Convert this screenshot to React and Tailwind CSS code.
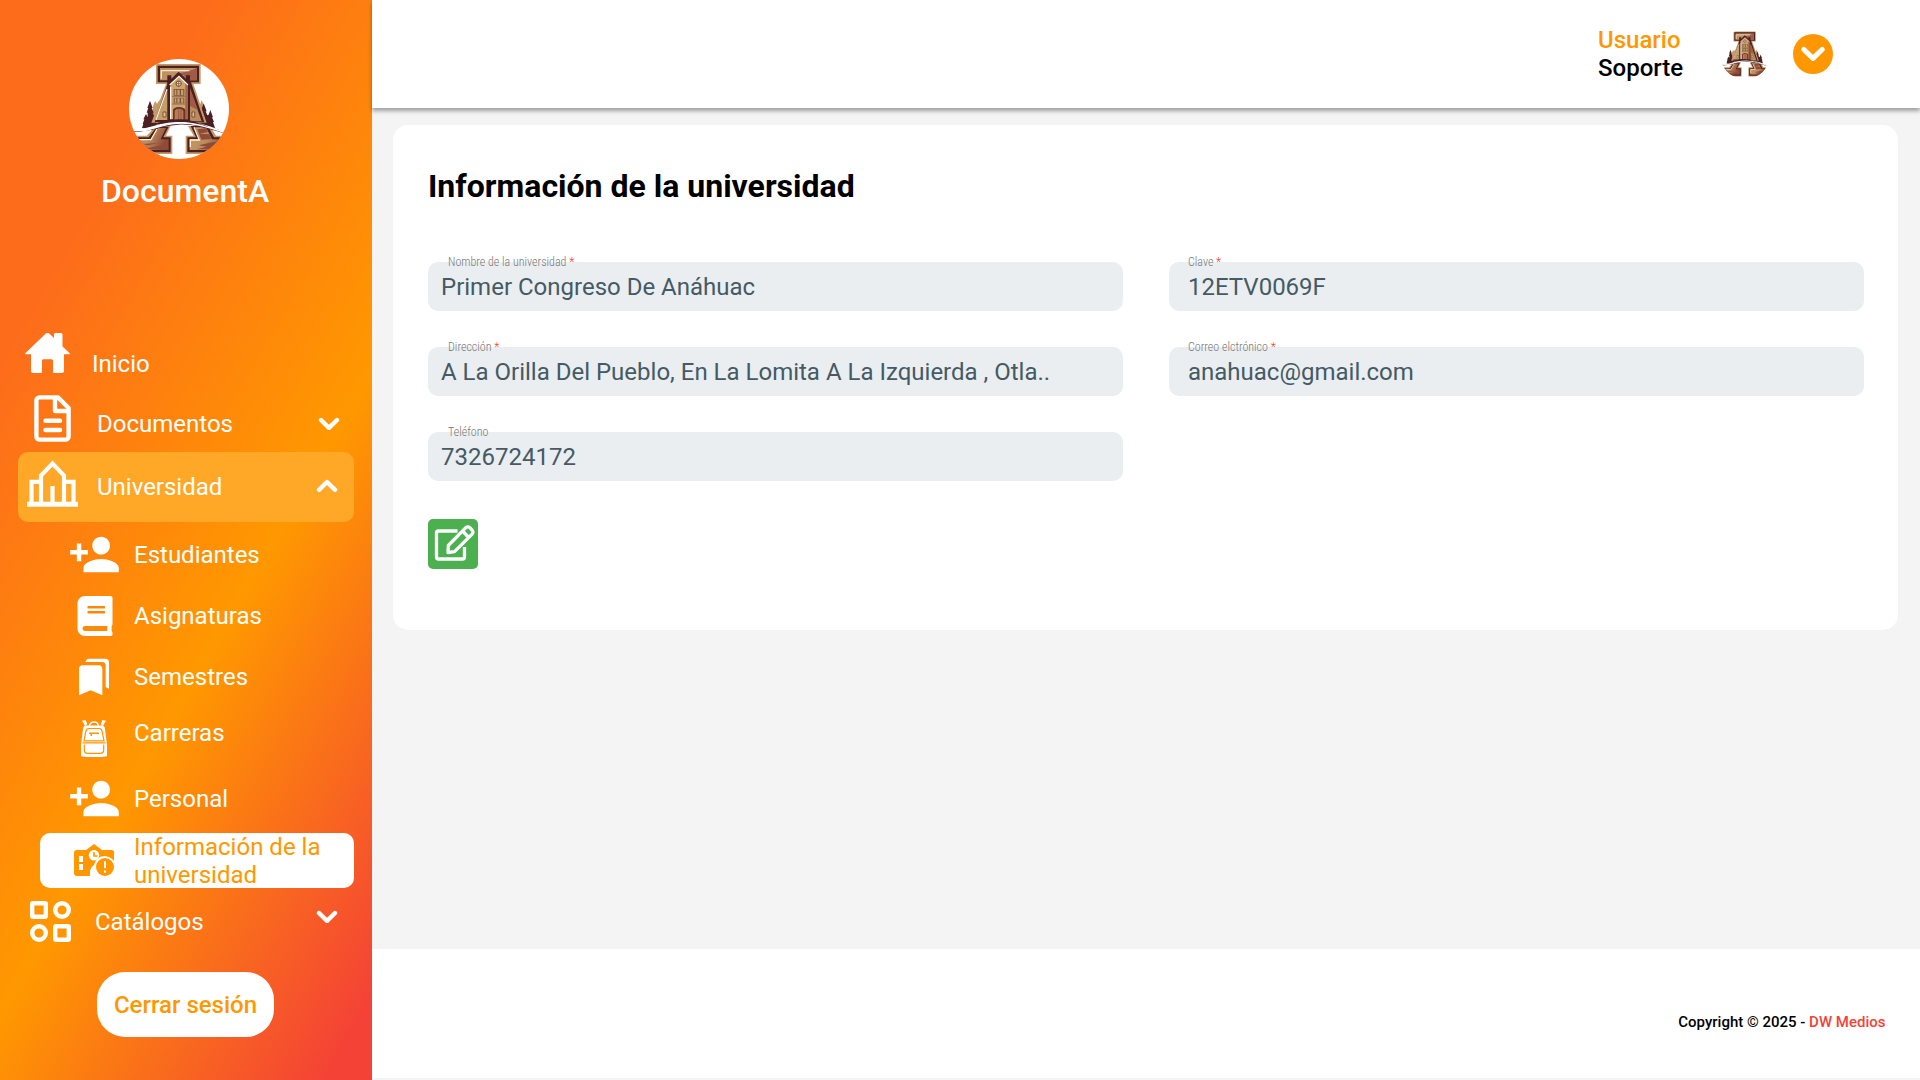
import React from "react";
import { MdPersonAdd, MdBookmarks } from "react-icons/md";
import { FaBook } from "react-icons/fa";

function Logo({ className }) {
  return (
    <svg viewBox="147 57 300 300" className={className}>
      <defs>
        <clipPath id="emblem">
          <circle cx="297" cy="207" r="150" />
        </clipPath>
        <linearGradient id="bronze" x1="0" x2="1" y1="0" y2="0.3">
          <stop offset="0" stopColor="#c79d68" />
          <stop offset="0.55" stopColor="#bb8c5c" />
          <stop offset="1" stopColor="#8f4a38" />
        </linearGradient>
      </defs>
      <circle cx="297" cy="207" r="150" fill="#fff" />
      <g clipPath="url(#emblem)">
        {/* pine trees */}
        <path d="M216 220l4-24 6-14 5 10 8-14v46l-12 24zM352 200l2-16 6 10 5-14 6 16 4 22-12 10z" fill="#c49a68" />
        <path d="M186 264l4-12-2 0 5-14-3 0 8-16 5 10 0-14-3 0 5-14-3 0 8-22 8 22-3 0 6 14-3 0 7 16-3 0 6 12 4 14-10 12z" fill="#4c1f22" />
        <path d="M360 224l4-10-2 0 9-24 9 24-3 0 5 12 4-2 5-14 8 22-3 0 6 14-3 0 6 18-24-2-26-12z" fill="#4c1f22" />
        {/* left foot */}
        <path d="M228 258h44l-14 29h19v55H150v-55h50z" fill="#c49a68" />
        <path d="M230 260h36l-16 32h22v45H150v-45h56z" fill="#4c1f22" />
        <path d="M234 264h24l-16 34h24v32H165l-8-32h56z" fill="url(#bronze)" />
        <path d="M160 299h53l18-32" stroke="#fff3dc" strokeWidth="4" fill="none" />
        <path d="M196 326l66-14v16h-60zM188 312l46-3-30 7z" fill="#8f4a38" />
        {/* right foot */}
        <path d="M324 258h66l18 29h40v55H317v-55h24z" fill="#c49a68" />
        <path d="M332 258h52l18 34h46v45H322v-45h26z" fill="#4c1f22" />
        <path d="M344 262h34l18 36h50l-20 32h-97v-32h30z" fill="url(#bronze)" />
        <path d="M331 322v-22h27l-16-38" stroke="#fff3dc" strokeWidth="4" fill="none" />
        <path d="M352 268l26-3 6 11-26 5 30 2 6 14-30 2zM356 316l44-10h40l-12 22h-78l30-8z" fill="#8f4a38" />
        {/* upper letter */}
        <path d="M228 72h134v60h-22l40 116H214l44-116h-30z" fill="#c49a68" />
        <path d="M233 77h124v50h-24l40 120H224l40-120h-31z" fill="#4c1f22" />
        <path d="M240 84h110v37H240z" fill="#bd9161" />
        <path d="M350 84v37h-28l-12-16-28-3q38-4 68-18z" fill="#a05a45" />
        <path d="M244 116V92h84" stroke="#ffe9c8" strokeWidth="4" fill="none" />
        <path d="M262 150v90h-32z" fill="#c79d68" />
        <path d="M261 148l-33 92" stroke="#fff0d6" strokeWidth="4" />
        <path d="M330 146l35 98h-35z" fill="#ba8a5c" />
        <path d="M330 144l24 66-24-12z" fill="#a05a45" />
        {/* tower */}
        <path d="M262 138v-32h12v10l22-21 22 21v-10h12v32l-4 4v98h-58v-98z" fill="#4c1f22" />
        <path d="M271 134l26-24 26 24v104h-52z" fill="#cda36e" />
        <path d="M316 128l7 7v103h-7z" fill="#a06545" />
        <path d="M269 135l28-26 27 26M272 140v98" stroke="#fff7e8" strokeWidth="4" fill="none" />
        <circle cx="296" cy="131" r="8" fill="#f5dfba" stroke="#6f4630" strokeWidth="3" />
        <path d="M296 123v16M288 131h16" stroke="#6f4630" strokeWidth="2" />
        <path d="M281 147h32v20h-32zM281 173h32v17h-32z" fill="#7c5138" />
        <path d="M284 149h5v16h-5zM292 149h7v16h-7zM303 149h7v16h-7zM284 175h5v13h-5zM292 175h7v13h-7zM303 175h7v13h-7z" fill="#c79d69" />
        <path d="M276 169h42M276 192h42" stroke="#8d6c58" strokeWidth="3" />
        <path d="M279 240v-30q2-8 17-9 18 1 20 9v30z" fill="#6e3226" />
        <path d="M284 240v-28q4-6 12-6 10 0 14 6v28z" fill="#b67c55" />
        <path d="M296 206v34M303 208v32" stroke="#8b4936" strokeWidth="2" />
        <path d="M249 216h9v15h-9zM336 216h8v15h-8z" fill="#e0c08e" stroke="#6f4630" strokeWidth="2.500" />
        {/* road arc */}
        <path d="M156 272c56-2 64-16 104-26 66-14 112 8 178 32l-2 3c-66-20-106-30-142-27-50 4-78 18-98 18-16 4-30 4-40 3z" fill="#4c1f22" />
        <path d="M160 271c52-2 64-14 100-22 62-12 110 4 172 28-64-22-104-30-140-27-50 4-74 18-96 21-14 2-26 1-36 0z" fill="#fff" stroke="#fff" strokeWidth="4" />
        <path d="M196 262c40-18 76-26 108-24 30 2 56 12 84 24-34-12-60-16-86-16-34 0-66 6-106 16z" fill="#4c1f22" />
      </g>
    </svg>
  );
}

function Chevron({ up, className }) {
  return (
    <svg viewBox="0 0 22 14" className={className} fill="none" stroke="currentColor" strokeWidth="4.4" strokeLinecap="round" strokeLinejoin="round">
      <path d={up ? "M3 10.8 11 3l8 7.8" : "M3 3l8 7.8L19 3"} />
    </svg>
  );
}

function HomeIcon({ className }) {
  return (
    <svg viewBox="0 0 45 40" className={className} fill="currentColor">
      <path d="M22.5 0c1 0 1.700.4 2.500 1.200l4 3.800V1.500C29 .5 29.500 0 30.500 0H35.500c1.200 0 2 .6 2 1.800V13.500L44.500 20c.6.6.4 1.200-.4 1.200H39V38c0 1.200-.8 2-2 2H29.500c-1 0-1.500-.5-1.500-1.500V28c0-1.200-.6-1.800-1.800-1.800h-7.500c-1.200 0-1.700.6-1.700 1.800v10.500c0 1-.5 1.500-1.500 1.500H8c-1.200 0-2-.8-2-2V21.200H.8C0 21.200-.1 20.600.5 20L20 1.200C20.800.4 21.500 0 22.500 0z" />
    </svg>
  );
}

function DocumentIcon({ className }) {
  return (
    <svg viewBox="0 0 37 47" className={className} fill="none" stroke="currentColor" strokeWidth="4.400" strokeLinecap="round" strokeLinejoin="round">
      <path d="M24 2.400H5.400a3 3 0 0 0-3 3v36.200a3 3 0 0 0 3 3h26.200a3 3 0 0 0 3-3V13z" />
      <path d="M21 3v13h13M11.500 25.700h14.500M11.500 35h14.500" />
    </svg>
  );
}

function UniversityIcon({ className }) {
  return (
    <svg viewBox="0 0 51 47" className={className} fill="none" stroke="currentColor" strokeWidth="4.200">
      <path d="M0 44.300h51" strokeWidth="5" />
      <path d="M14 43V15.500L25.500 3.500 37 15.500V43M4.500 43V21.800H14M37 21.800h9.500V43M25.500 43V26" />
    </svg>
  );
}

function BackpackIcon({ className }) {
  return (
    <svg viewBox="0 0 26 37" className={className}>
      <path d="M1 .8 4.500 0l1.700 4-2 2zM25 .8 21.500 0l-1.700 4 2 2z" fill="currentColor" />
      <path d="M8.500 6Q9 2 13 2t4.500 4" fill="none" stroke="currentColor" strokeWidth="1.300" />
      <path d="M5 5.500h16c2 0 2.600 1.500 3 3.500L26 25v11c0 1-9 1-13 1s-13 0-13-1V25L2 9c.4-2 1-3.500 3-3.500z" fill="currentColor" />
      <path d="M7.800 8.500h10.400c2 0 2.500 1.200 3 3L23 20.800H3L4.800 11.500c.5-1.800 1-3 3-3zM1.500 22.800h23M3.300 24.500v5.500q0 3.300 3.500 3.300h12.400q3.500 0 3.500-3.300v-5.500" fill="none" stroke="#ff9500" strokeWidth="1.200" />
      <path d="M8 12.500h10v1.500h-7v2h-1.500v-2H8z" fill="#ff9500" />
    </svg>
  );
}

function SchoolInfoIcon({ className }) {
  return (
    <svg viewBox="0 0 40 32" className={className}>
      <path d="M3 6h9l8-6 8 6h9q3 0 3 3v23H16v-6q0-4 5-7v13H3q-3 0-3-3V9q0-3 3-3z" fill="#ff9800" />
      <path d="M5 12h4v6H5zM5 20h4v6H5z" fill="#fff" />
      <circle cx="20" cy="11.300" r="5.200" fill="#fff" />
      <path d="M20 8v4h3.500" fill="none" stroke="#ff9800" strokeWidth="1.600" />
      <path d="M16 32v-4q0-4 4-7l3-3 18-2v16z" fill="#fff" />
      <circle cx="31" cy="23" r="11" fill="#fff" />
      <path d="M30 6h7q3 0 3 3v8q-4-5-10-5z" fill="#ff9800" />
      <circle cx="31" cy="23" r="9" fill="#ff9800" />
      <path d="M30 17.300h2v7h-2zM30 26.500h2v2.200h-2z" fill="#fff" />
    </svg>
  );
}

function CatalogIcon({ className }) {
  return (
    <svg viewBox="0 0 41 41" className={className} fill="none" stroke="currentColor" strokeWidth="4.400" strokeLinejoin="round">
      <rect x="2.200" y="2.200" width="13.600" height="13.600" rx="1" />
      <circle cx="32" cy="9" r="6.800" />
      <circle cx="9" cy="32" r="6.800" />
      <rect x="25.200" y="25.200" width="13.600" height="13.600" rx="1" />
    </svg>
  );
}

function EditIcon({ className }) {
  return (
    <svg viewBox="0 0 50 50" className={className} fill="none" stroke="#fff" strokeWidth="3.300" strokeLinejoin="round">
      <path d="M29.500 12H10.500a2 2 0 0 0-2 2v24a2 2 0 0 0 2 2H34.500a2 2 0 0 0 2-2V28" />
      <path d="M20 33.500l.3-7L37.800 8.700a2.800 2.800 0 0 1 4 0l2.300 2.400a2.800 2.800 0 0 1 0 4L26.500 32.700zM34.500 12l6.200 6.500" />
    </svg>
  );
}

function Field({ label, value, required, inset, labelInset }) {
  return (
    <div className={`relative h-[49px] rounded-[10px] bg-[#eaeef1] pt-[11px] text-2xl leading-7 text-[#455a64] ${inset}`}>
      <span className={`absolute top-[-7px] whitespace-nowrap text-[12px] font-light leading-[14px] text-[#777] [font-stretch:75%] ${labelInset}`}>
        {label}
        {required && <span className="text-[#f44336]"> *</span>}
      </span>
      {value}
    </div>
  );
}

export default function App() {
  return (
    <div className="flex h-[1080px] w-[1920px] overflow-hidden bg-[#f4f4f4] font-['Roboto',sans-serif] text-black">
      <aside className="flex w-[372px] shrink-0 flex-col bg-[linear-gradient(120deg,#fd6c1b_21%,#ff9800_59%,#f44336_95%)] text-2xl leading-7 text-white">
        <div className="flex h-[325px] flex-col pt-[59px]">
          <Logo className="ml-[129px] size-[100px]" />
          <div className="mt-[13px] pr-[2px] text-center text-[32px] font-medium leading-[38px]">DocumentA</div>
        </div>

        <nav className="flex flex-col">
          <div className="flex h-[65px] items-start">
            <HomeIcon className="ml-[25px] mt-[8px] h-[40px] w-[45px]" />
            <span className="ml-[22px] mt-[25px]">Inicio</span>
          </div>
          <div className="flex h-[62px] items-start">
            <DocumentIcon className="ml-[34px] mt-[5px] h-[47px] w-[37px]" />
            <span className="ml-[26px] mt-[20px] flex-1">Documentos</span>
            <Chevron className="mr-[32.5px] mt-[27px] h-[14px] w-[22px]" />
          </div>
          <div className="ml-[18px] flex h-[70px] w-[336px] items-start rounded-[10px] bg-[#ffa726]">
            <UniversityIcon className="ml-[9px] mt-[8px] h-[47px] w-[51px]" />
            <span className="ml-[19px] mt-[21px] flex-1">Universidad</span>
            <Chevron up className="mr-[16.5px] mt-[27px] h-[14px] w-[22px]" />
          </div>
          <div className="flex h-[64px] items-start">
            <MdPersonAdd className="ml-[67.5px] mt-[6px] size-[53px]" />
            <span className="ml-[13.5px] mt-[19px]">Estudiantes</span>
          </div>
          <div className="flex h-[60px] items-start">
            <FaBook className="ml-[74.500px] mt-[10px] size-[40px]" />
            <span className="ml-[19.500px] mt-[16px]">Asignaturas</span>
          </div>
          <div className="flex h-[61px] items-start">
            <MdBookmarks className="ml-[74px] mt-[11px] size-[40px]" />
            <span className="ml-[20px] mt-[17px]">Semestres</span>
          </div>
          <div className="flex h-[61px] items-start">
            <BackpackIcon className="ml-[81px] mt-[13px] h-[37px] w-[26px]" />
            <span className="ml-[27px] mt-[12px]">Carreras</span>
          </div>
          <div className="flex h-[65px] items-start">
            <MdPersonAdd className="ml-[67.5px] mt-[4px] size-[53px]" />
            <span className="ml-[13.5px] mt-[17px]">Personal</span>
          </div>
          <div className="ml-[40px] flex h-[55px] w-[314px] items-start rounded-[10px] bg-white text-[#ff9800]">
            <SchoolInfoIcon className="ml-[34px] mt-[11px] h-[32px] w-[40px]" />
            <span className="ml-[20px] w-[200px]">Información de la universidad</span>
          </div>
          <div className="flex h-[84px] items-start">
            <CatalogIcon className="ml-[30px] mt-[13px] size-[41px]" />
            <span className="ml-[24px] mt-[20px] flex-1">Catálogos</span>
            <Chevron className="mr-[34.5px] mt-[22px] h-[14px] w-[22px]" />
          </div>
        </nav>

        <button className="ml-[97px] h-[65px] w-[177px] rounded-[28px] bg-white font-medium text-[#ff9800]">
          Cerrar sesión
        </button>
      </aside>

      <main className="flex flex-1 flex-col">
        <header className="flex h-[108px] shrink-0 items-center justify-end bg-white pr-[87px] shadow-[0_3px_4px_rgba(0,0,0,0.35)]">
          <div className="w-[122px] text-2xl font-medium leading-7">
            <div className="text-[#ff9800]">Usuario</div>
            <div>Soporte</div>
          </div>
          <Logo className="size-[50px]" />
          <div className="ml-[23px] flex size-[40px] items-center justify-center rounded-full bg-[#ff9800] text-white">
            <Chevron className="h-[16px] w-[26px]" />
          </div>
        </header>

        <section className="ml-[21px] mt-[17px] h-[505px] w-[1505px] rounded-[15px] bg-white px-[35px] pt-[42px]">
          <h1 className="text-[32px] font-bold leading-[38px]">Información de la universidad</h1>
          <div className="mt-[57px] grid grid-cols-[695px_695px] gap-x-[46px] gap-y-[36px]">
            <Field label="Nombre de la universidad" value="Primer Congreso De Anáhuac" required inset="pl-[13px]" labelInset="left-[20px]" />
            <Field label="Clave" value="12ETV0069F" required inset="pl-[19px]" labelInset="left-[19px]" />
            <Field label="Dirección" value="A La Orilla Del Pueblo, En La Lomita A La Izquierda , Otla.." required inset="pl-[13px]" labelInset="left-[20px]" />
            <Field label="Correo elctrónico" value="anahuac@gmail.com" required inset="pl-[19px]" labelInset="left-[19px]" />
            <Field label="Teléfono" value="7326724172" inset="pl-[13px]" labelInset="left-[20px]" />
          </div>
          <button className="mt-[38px] size-[50px] rounded-[5px] bg-[#4caf50]">
            <EditIcon className="size-[50px]" />
          </button>
        </section>

        <footer className="mb-[2px] mt-auto flex h-[129px] items-center justify-end bg-white pr-[34.5px] pt-[16px] text-[15px] font-medium leading-[18px]">
          <span className="whitespace-pre">Copyright © 2025 - </span>
          <span className="text-[#f44336]">DW Medios</span>
        </footer>
      </main>
    </div>
  );
}
